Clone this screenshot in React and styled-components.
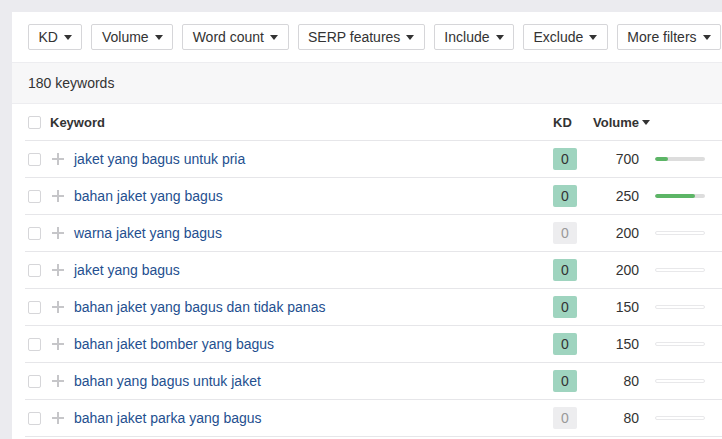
import React from 'react';
import styled, { createGlobalStyle } from 'styled-components';

const GlobalStyle = createGlobalStyle`
  body {
    margin: 0;
    background: #ebebef;
    font-family: "Liberation Sans", Arial, sans-serif;
    color: #333;
  }
`;

const Page = styled.div`
  padding: 12px 0 0 12px;
  height: 427px;
  overflow: hidden;
`;

const Panel = styled.div`
  background: #fff;
  width: 740px;
  height: 100%;
`;

const FilterBar = styled.div`
  display: flex;
  gap: 9px;
  padding: 12px 16px;
  white-space: nowrap;
`;

const FilterButton = styled.button`
  display: flex;
  align-items: center;
  gap: 6px;
  height: 26px;
  padding: 0 9.5px;
  border: 1px solid #d6d6d9;
  border-radius: 2px;
  background: #fff;
  font-family: inherit;
  font-size: 14px;
  color: #333;
  flex-shrink: 0;
`;

const Caret = styled.span`
  width: 0;
  height: 0;
  border-left: 4px solid transparent;
  border-right: 4px solid transparent;
  border-top: 5px solid #333;
`;

const CountStrip = styled.div`
  height: 40px;
  display: flex;
  align-items: center;
  padding-left: 16px;
  background: #f7f7f8;
  border-top: 1px solid #ededf0;
  border-bottom: 1px solid #ededf0;
  font-size: 14px;
  color: #333;
`;

const Table = styled.div`
  padding-left: 13px;
`;

const Row = styled.div`
  display: grid;
  grid-template-columns: 15px 24px 486px 40px 62px 50px 1fr;
  align-items: center;
  height: 36px;
  border-bottom: 1px solid #e6e6e9;
  padding-left: 3px;
`;

const HeadRow = styled(Row)`
  grid-template-columns: 22px 503px 40px 112px 1fr;
  font-size: 13px;
  font-weight: bold;
  color: #333;
`;

const Checkbox = styled.span`
  width: 13px;
  height: 13px;
  border: 1px solid #d6d6d9;
  border-radius: 2px;
  background: #fff;
  box-sizing: border-box;
  display: block;
`;

const Plus = styled.span`
  position: relative;
  width: 12px;
  height: 12px;
  margin-left: 9px;
  &::before,
  &::after {
    content: '';
    position: absolute;
    background: #c6c6c9;
  }
  &::before {
    left: 5px;
    top: 0;
    width: 2px;
    height: 12px;
  }
  &::after {
    top: 5px;
    left: 0;
    height: 2px;
    width: 12px;
  }
`;

const Keyword = styled.a`
  color: #244f8f;
  font-size: 14px;
  padding-left: 7px;
  text-decoration: none;
`;

const Badge = styled.span`
  width: 24px;
  height: 22px;
  border-radius: 2px;
  display: flex;
  align-items: center;
  justify-content: center;
  font-size: 14px;
  background: ${(p) => (p.$muted ? '#ededef' : '#9fd4bf')};
  color: ${(p) => (p.$muted ? '#999' : '#333')};
`;

const Volume = styled.div`
  text-align: right;
  font-size: 14px;
  padding-right: 16px;
`;

const HeadVolume = styled.div`
  display: flex;
  align-items: center;
  gap: 3px;
`;

const Bar = styled.div`
  width: 50px;
  height: 4px;
  border-radius: 2px;
  background: ${(p) => (p.$empty ? '#fff' : '#dddddd')};
  border: ${(p) => (p.$empty ? '1px solid #e8e8ea' : 'none')};
  box-sizing: border-box;
  overflow: hidden;
`;

const Fill = styled.div`
  height: 100%;
  background: #5cb566;
  border-radius: 2px;
`;

const filters = ['KD', 'Volume', 'Word count', 'SERP features', 'Include', 'Exclude', 'More filters'];

const rows = [
  { kw: 'jaket yang bagus untuk pria', vol: 700, fill: 26, muted: false },
  { kw: 'bahan jaket yang bagus', vol: 250, fill: 80, muted: false },
  { kw: 'warna jaket yang bagus', vol: 200, fill: 0, muted: true },
  { kw: 'jaket yang bagus', vol: 200, fill: 0, muted: false },
  { kw: 'bahan jaket yang bagus dan tidak panas', vol: 150, fill: 0, muted: false },
  { kw: 'bahan jaket bomber yang bagus', vol: 150, fill: 0, muted: false },
  { kw: 'bahan yang bagus untuk jaket', vol: 80, fill: 0, muted: false },
  { kw: 'bahan jaket parka yang bagus', vol: 80, fill: 0, muted: true },
];

export default function App() {
  return (
    <>
      <GlobalStyle />
      <Page>
        <Panel>
          <FilterBar>
            {filters.map((f) => (
              <FilterButton key={f}>
                {f}
                <Caret />
              </FilterButton>
            ))}
          </FilterBar>
          <CountStrip>180 keywords</CountStrip>
          <Table>
            <HeadRow>
              <Checkbox />
              <span>Keyword</span>
              <span>KD</span>
              <HeadVolume>
                Volume
                <Caret />
              </HeadVolume>
              <span />
            </HeadRow>
            {rows.map((r) => (
              <Row key={r.kw}>
                <Checkbox />
                <Plus />
                <Keyword href="#">{r.kw}</Keyword>
                <Badge $muted={r.muted}>0</Badge>
                <Volume>{r.vol}</Volume>
                <Bar $empty={r.fill === 0}>
                  {r.fill > 0 && <Fill style={{ width: `${r.fill}%` }} />}
                </Bar>
                <span />
              </Row>
            ))}
          </Table>
        </Panel>
      </Page>
    </>
  );
}
